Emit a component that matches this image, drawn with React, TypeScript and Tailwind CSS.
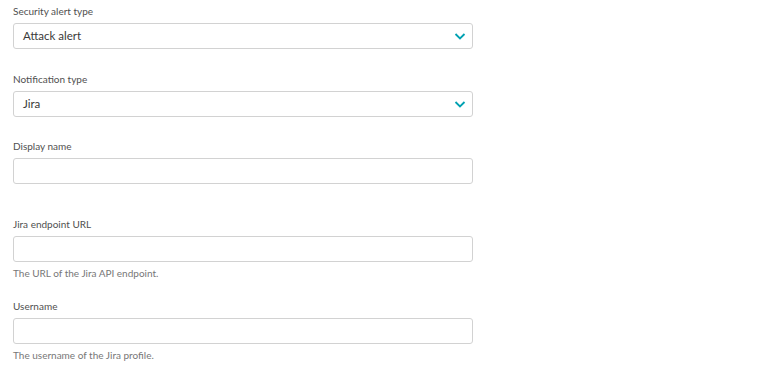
const font = { fontFamily: "Lato, 'Open Sans', sans-serif" };

function Label({ children }: { children: string }) {
  return <div className="h-4 mb-1 text-[10px] leading-4 text-[#505050]">{children}</div>;
}

function Chevron() {
  return (
    <svg width="12" height="7" viewBox="0 0 12 7" className="text-[#00a1b2]">
      <polyline points="1.5,1 6,5.5 10.5,1" fill="none" stroke="currentColor" strokeWidth="1.8" />
    </svg>
  );
}

function Select({ value }: { value: string }) {
  return (
    <div className="h-[26px] w-[460px] flex items-center justify-between border border-[#d2d2d2] rounded-[3px] pl-[9px] pr-[6px] bg-white">
      <span className="text-[11.5px] text-[#3a3a3a]">{value}</span>
      <Chevron />
    </div>
  );
}

function Input() {
  return <div className="h-[26px] w-[460px] border border-[#d2d2d2] rounded-[3px] bg-white" />;
}

function Help({ children }: { children: string }) {
  return <div className="mt-[3px] text-[10px] leading-4 text-[#777777]">{children}</div>;
}

export default function App() {
  return (
    <div className="w-[771px] h-[372px] bg-white pl-[13px] pt-[3px]" style={font}>
      <Label>Security alert type</Label>
      <Select value="Attack alert" />

      <div className="mt-[22px]">
        <Label>Notification type</Label>
        <Select value="Jira" />
      </div>

      <div className="mt-[21px]">
        <Label>Display name</Label>
        <Input />
      </div>

      <div className="mt-[32px]">
        <Label>Jira endpoint URL</Label>
        <Input />
        <Help>The URL of the Jira API endpoint.</Help>
      </div>

      <div className="mt-[17px]">
        <Label>Username</Label>
        <Input />
        <Help>The username of the Jira profile.</Help>
      </div>
    </div>
  );
}
